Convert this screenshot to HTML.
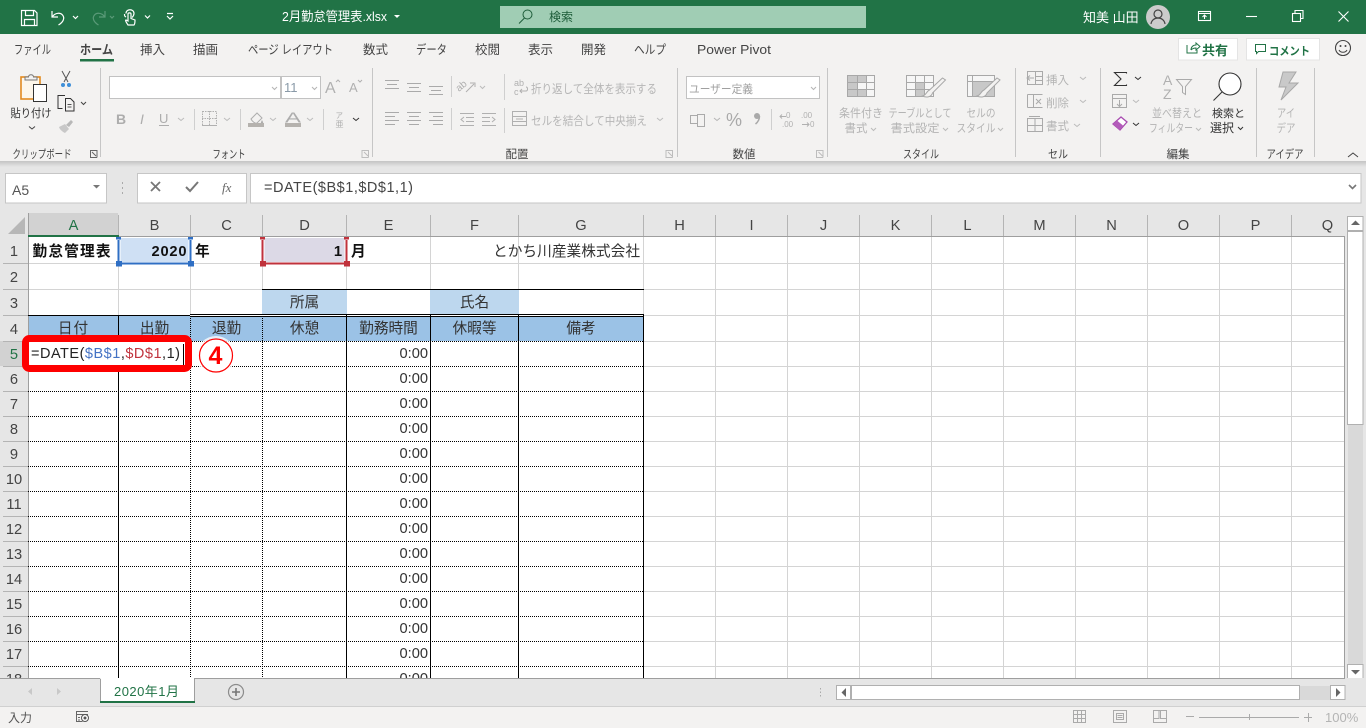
<!DOCTYPE html>
<html lang="ja"><head><meta charset="utf-8"><title>2月勤怠管理表.xlsx</title>
<style>
html,body{margin:0;padding:0;width:1366px;height:728px;overflow:hidden;background:#e6e6e6}
svg{display:block;position:absolute;left:0;top:0}
text{font-family:"Liberation Sans","Noto Sans CJK JP",sans-serif;white-space:pre}
.tab{font-size:12.5px;fill:#444}
.lbl{font-size:11.5px;fill:#444;text-anchor:middle}
.dis{font-size:11.5px;fill:#b4b4b4}
.dm{text-anchor:middle}
.c{font-size:14.67px;fill:#333}
.b{font-weight:bold;fill:#111}
.h{font-size:14.67px;fill:#444;text-anchor:middle}
.m{text-anchor:middle}
.e{text-anchor:end}
</style></head><body>
<svg width="1366" height="728" viewBox="0 0 1366 728" xmlns="http://www.w3.org/2000/svg">
<defs>
<linearGradient id="sh" x1="0" y1="0" x2="0" y2="1"><stop offset="0" stop-color="#c4c4c4"/><stop offset="1" stop-color="#e6e6e6"/></linearGradient>
<clipPath id="sheet"><rect x="0" y="213" width="1345" height="465"/></clipPath>
</defs>

<!-- title bar -->
<rect width="1366" height="34" fill="#217346"/>
<g fill="none" stroke="#fff" stroke-width="1.2">
<path d="M21.500 10.500h13l2.500 2.500v12.500h-15.500z"/><path d="M25.500 10.500v5h8v-5M24.500 25.500v-6h10v6"/>
<path d="M52 11v6h6M52.500 16.500c3-4 8-4 10-1.500 2.500 3 1 7-4 10"/>
<path d="M73 16l2.500 2.500 2.500-2.500"/>
</g>
<g fill="none" stroke="#5a9a78" stroke-width="1.200"><path d="M105 11v6h-6M104.500 16.500c-3-4-8-4-10-1.500-2.500 3-1 7 4 10"/><path d="M110 16l2 2 2-2"/></g>
<g fill="none" stroke="#fff" stroke-width="1.200">
<path d="M126 13.500c0-5 8-5 8 0 0 2-1 3-2 4M126 17c-1.500-1-1.500-1-1.500-3"/><path d="M128 14v7l-2-1c-1 0 0 2 2 5h6c1-1 1-3 1-5l-4-1.500v-4.500c0-1.500-3-1.500-3 0z"/>
<path d="M145 15.500l2.500 2.500 2.500-2.500"/><path d="M167 13.500h6M167 16l3 3 3-3"/>
</g>
<text x="282" y="21" font-size="13" fill="#fff" textLength="105" lengthAdjust="spacingAndGlyphs">2月勤怠管理表.xlsx</text>
<path d="M394 15h6l-3 3z" fill="#fff"/>
<rect x="500" y="6" width="366" height="22" fill="#a0cdb4"/>
<circle cx="527.500" cy="14.500" r="4.500" fill="none" stroke="#1d5c39" stroke-width="1"/><path d="M524.500 18l-5.500 5.500" stroke="#1d5c39" stroke-width="1"/>
<text x="549" y="21" font-size="12" fill="#1d5c39">検索</text>
<text x="1083" y="22" font-size="13" fill="#fff">知美 山田</text>
<circle cx="1158" cy="17" r="12" fill="#cbcbcb"/>
<circle cx="1158" cy="14" r="4" fill="none" stroke="#444" stroke-width="1.200"/><path d="M1151 24c1-8 13-8 14 0" fill="none" stroke="#444" stroke-width="1.200"/>
<g fill="none" stroke="#fff" stroke-width="1.100">
<rect x="1198.500" y="11.500" width="12" height="9"/><path d="M1198.500 13.500h12M1204.500 19v-4M1202.500 17l2-2 2 2"/>
<path d="M1246 16.500h11"/>
<rect x="1292.500" y="13.500" width="8" height="8"/><path d="M1295 13v-2.500h8v8h-2.500"/>
<path d="M1338.500 11.500l10 10M1348.500 11.500l-10 10"/>
</g>

<!-- ribbon -->
<rect y="34" width="1366" height="127" fill="#f3f2f1"/>
<rect y="161" width="1366" height="6" fill="url(#sh)"/>
<text class="tab" x="14" y="54" textLength="37" lengthAdjust="spacingAndGlyphs">ファイル</text>
<text class="tab" x="80" y="54" font-weight="bold" textLength="33" lengthAdjust="spacingAndGlyphs">ホーム</text>
<rect x="80" y="59" width="34" height="2.500" fill="#217346"/>
<text class="tab" x="140" y="54">挿入</text>
<text class="tab" x="193" y="54">描画</text>
<text class="tab" x="248" y="54" textLength="85" lengthAdjust="spacingAndGlyphs">ページ レイアウト</text>
<text class="tab" x="363" y="54">数式</text>
<text class="tab" x="416" y="54" textLength="31" lengthAdjust="spacingAndGlyphs">データ</text>
<text class="tab" x="475" y="54">校閲</text>
<text class="tab" x="528" y="54">表示</text>
<text class="tab" x="581" y="54">開発</text>
<text class="tab" x="634" y="54" textLength="32" lengthAdjust="spacingAndGlyphs">ヘルプ</text>
<text class="tab" x="697" y="54" textLength="74" lengthAdjust="spacingAndGlyphs">Power Pivot</text>

<rect x="1178.500" y="38.500" width="59" height="21.500" fill="#fff" stroke="#e4e4e4"/>
<path d="M1187 45v8h10v-3M1191 50c0-3 2-5 5-5v-2l4 3.500-4 3.500v-2c-2 0-4 1-5 2" fill="none" stroke="#217346"/>
<text x="1202" y="55" font-size="13" font-weight="bold" fill="#217346">共有</text>
<rect x="1246.500" y="38.500" width="73" height="21.500" fill="#fff" stroke="#e4e4e4"/>
<path d="M1255.500 44.500h10v7h-7l-2 2v-2h-1z" fill="none" stroke="#217346"/>
<text x="1269" y="55" font-size="11.500" font-weight="bold" fill="#217346" textLength="41" lengthAdjust="spacingAndGlyphs">コメント</text>
<circle cx="1343" cy="48" r="7.500" fill="none" stroke="#444" stroke-width="1.100"/><circle cx="1340.500" cy="46" r="1" fill="#444"/><circle cx="1345.500" cy="46" r="1" fill="#444"/><path d="M1339 50c1.500 3 6.500 3 8 0" fill="none" stroke="#444"/>

<!-- group separators -->
<path d="M100.500 68v89M372.500 68v89M677.500 68v89M827.500 68v89M1015.500 68v89M1100.500 68v89M1256.500 68v89M1314.500 68v89" stroke="#c6c6c6"/>
<text class="lbl" x="42" y="158" textLength="59" lengthAdjust="spacingAndGlyphs">クリップボード</text>
<text class="lbl" x="229" y="158" textLength="33" lengthAdjust="spacingAndGlyphs">フォント</text>
<text class="lbl" x="517" y="158">配置</text>
<text class="lbl" x="744" y="158">数値</text>
<text class="lbl" x="921" y="158" textLength="36" lengthAdjust="spacingAndGlyphs">スタイル</text>
<text class="lbl" x="1058" y="158" textLength="20" lengthAdjust="spacingAndGlyphs">セル</text>
<text class="lbl" x="1178" y="158">編集</text>
<text class="lbl" x="1285" y="158" textLength="37" lengthAdjust="spacingAndGlyphs">アイデア</text>
<path d="M90 150.500h7v7M90.500 151v6.500h6.500M92 152l4 4" fill="none" stroke="#666"/>
<path d="M361.500 150.500h7v7M362 151v6.500h6.500M364 152l4 4M665.500 150.500h7v7M666 151v6.500h6.500M668 152l4 4M816 150.500h7v7M816.500 151v6.500h6.500M818.500 152l4 4" fill="none" stroke="#bdbdbd"/>

<!-- clipboard -->
<rect x="21" y="77" width="19" height="22" fill="#fdf6ea" stroke="#e38a1e" stroke-width="1.600"/>
<path d="M25 80v-3h3.500c0-3 5-3 5 0h3.500v3z" fill="#f3f2f1" stroke="#777"/>
<rect x="33.500" y="84.500" width="13" height="17" fill="#fff" stroke="#333"/>
<text x="31" y="117" font-size="11.500" fill="#333" class="m" textLength="41" lengthAdjust="spacingAndGlyphs">貼り付け</text>
<path d="M29 126.500l3 2.500 3-2.500" fill="none" stroke="#444"/>
<path d="M62 71l6 11M70 71l-6 11" stroke="#555" fill="none"/><circle cx="63" cy="85" r="2" fill="#3f8fd8"/><circle cx="69" cy="85" r="2" fill="#3f8fd8"/>
<path d="M62.500 108.500h-4.500v-13h7M65.500 98.500h5l3.500 3.500v9h-8.500z" fill="none" stroke="#333"/><path d="M67.500 104.500h4M67.500 107h4" stroke="#555"/>
<path d="M81 102l2.500 2.500 2.500-2.500" fill="none" stroke="#444"/>
<path d="M59 127l6-3 4 5-4 4c-2-1-5-3-6-6z" fill="#c8c8c8"/><path d="M66 125l5-5 2 2-4 5z" fill="#b8b8b8"/>

<!-- font -->
<rect x="109.500" y="76.500" width="171" height="22" fill="#fff" stroke="#c2c2c2"/>
<rect x="281.500" y="76.500" width="39" height="22" fill="#fff" stroke="#c2c2c2"/>
<path d="M272 87l2.500 2.500 2.500-2.500M312 87l2.500 2.500 2.500-2.500" fill="none" stroke="#b5b5b5"/>
<text x="284" y="92" font-size="13" fill="#8a9aa8">11</text>
<text x="325" y="93" font-size="16" fill="#b0b0b0">A</text><path d="M336 82l2-2 2 2" fill="none" stroke="#b0b0b0"/>
<text x="349" y="92" font-size="13" fill="#b0b0b0">A</text><path d="M358 80l2 2 2-2" fill="none" stroke="#b0b0b0"/>
<text x="116" y="124" font-size="14" font-weight="bold" fill="#adadad">B</text>
<text x="140" y="124" font-size="14" font-style="italic" fill="#adadad" style="font-family:'Liberation Sans'">I</text>
<text x="159" y="123" font-size="13" fill="#adadad">U</text><path d="M159 125.500h10" stroke="#adadad"/>
<path d="M178 118l3 2.500 3-2.500M224 118l3 2.500 3-2.500M270 118l3 2.500 3-2.500M307 118l3 2.500 3-2.500" fill="none" stroke="#bcbcbc"/>
<path d="M194.500 109v21M240.500 109v21M323.500 109v21" stroke="#cfcfcf"/>
<rect x="202.500" y="111.500" width="14" height="14" fill="none" stroke="#b0b0b0" stroke-dasharray="1.500 1"/><path d="M209.500 111v15M202 118.500h15" stroke="#b0b0b0" stroke-dasharray="1.500 1"/><path d="M202 125.500h15" stroke="#b0b0b0"/>
<path d="M251 119l6-6 5 5-5 5c-2 1-5-2-6-4z" fill="none" stroke="#adadad"/><path d="M262 120c1 2 2 3 0 4-2 0-1-2 0-4z" fill="#adadad"/><rect x="248" y="123" width="16" height="4" fill="#b5b2ae"/>
<text x="285" y="122.500" font-size="15" fill="#adadad" textLength="16" lengthAdjust="spacingAndGlyphs">A</text><rect x="285" y="123" width="16" height="4" fill="#b5b2ae"/>
<text x="335.500" y="118" font-size="7.500" fill="#adadad">ア</text><text x="335.500" y="127" font-size="8" fill="#adadad">亜</text>
<path d="M353 118l3 2.500 3-2.500" fill="none" stroke="#333"/>

<!-- alignment -->
<path d="M385 80.500h14M387 84.500h10M385 88.500h14M407 83.500h14M409 87.500h10M407 91.500h14M429 86.500h14M431 90.500h10M429 94.500h14" stroke="#aaa"/>
<path d="M385 112.500h14M385 116.500h10M385 120.500h14M385 124.500h10M407 112.500h14M409 116.500h10M407 120.500h14M409 124.500h10M429 112.500h14M433 116.500h10M429 120.500h14M433 124.500h10" stroke="#aaa"/>
<path d="M451.500 76v21M451.500 108v22M504.500 74v26M504.500 108v25" stroke="#cfcfcf"/>
<text x="459" y="92" font-size="10" fill="#b0b0b0" transform="rotate(-40 459 92)">ab</text><path d="M466 92l8-8M470 83h5v4" fill="none" stroke="#b0b0b0"/><path d="M480 86l2.500 2.500 2.500-2.500" fill="none" stroke="#bcbcbc"/>
<path d="M460 113.500h14M460 125.500h14M466 117.500h8M466 121.500h8M464 117l-3 2.500 3 2.500M482 113.500h14M482 125.500h14M482 117.500h8M482 121.500h8M492 117l3 2.500-3 2.500" fill="none" stroke="#b0b0b0"/>
<text x="514" y="86" font-size="9" fill="#b0b0b0">ab</text><text x="514" y="95" font-size="9" fill="#b0b0b0">c</text><path d="M520 91h6c2 0 2-4 0-4M522 89l-2 2 2 2" fill="none" stroke="#b0b0b0"/>
<text x="531" y="93" font-size="12" fill="#b6b6b6" textLength="126" lengthAdjust="spacingAndGlyphs">折り返して全体を表示する</text>
<rect x="512.500" y="111.500" width="14" height="14" fill="none" stroke="#b0b0b0"/><path d="M512 116.500h15M512 121.500h15M516 119h7" stroke="#b0b0b0"/>
<text x="531" y="125" font-size="12" fill="#b6b6b6" textLength="116" lengthAdjust="spacingAndGlyphs">セルを結合して中央揃え</text>
<path d="M657 118l3 2.500 3-2.500" fill="none" stroke="#bcbcbc"/>

<!-- number -->
<rect x="686.500" y="76.500" width="133" height="22" fill="#fff" stroke="#c2c2c2"/>
<text x="689" y="93" font-size="11.500" fill="#a0a0a0" textLength="64" lengthAdjust="spacingAndGlyphs">ユーザー定義</text>
<path d="M811 87l2.500 2.500 2.500-2.500M714 118l3 2.500 3-2.500" fill="none" stroke="#b5b5b5"/>
<rect x="690.500" y="115.500" width="12" height="8" fill="none" stroke="#aaa"/><rect x="697.500" y="114.500" width="7" height="12" fill="#f3f2f1" stroke="#aaa"/>
<text x="726" y="126" font-size="18" fill="#a9a9a9">%</text>
<circle cx="757" cy="116" r="3" fill="#a9a9a9"/><path d="M759.500 116c0 4-1.500 6-4 8" fill="none" stroke="#a9a9a9" stroke-width="1.500"/>
<path d="M771.500 109v21" stroke="#cfcfcf"/>
<text x="786" y="118" font-size="8" fill="#b0b0b0">0</text><text x="782" y="127" font-size="8" fill="#b0b0b0">.00</text>
<path d="M780 116.500h6M782 114.500l-2 2 2 2" stroke="#b0b0b0" fill="none"/>
<text x="801" y="118" font-size="8" fill="#b0b0b0">.00</text><text x="810" y="127" font-size="8" fill="#b0b0b0">0</text>
<path d="M802 124.500h7M807 122.500l2 2-2 2" stroke="#b0b0b0" fill="none"/>

<!-- styles -->
<rect x="847.500" y="75.500" width="27" height="21" fill="#f6f6f6" stroke="#a8a8a8"/>
<path d="M848 75h18v7h-9v7h9v7h-18z" fill="#c8c8c8"/>
<path d="M847 82.500h28M847 89.500h28M857.500 75v22M866.500 75v22" stroke="#a8a8a8"/><rect x="847.500" y="75.500" width="27" height="21" fill="none" stroke="#a8a8a8"/>
<rect x="906.500" y="75.500" width="27" height="21" fill="#f6f6f6" stroke="#a8a8a8"/><rect x="916" y="83" width="9" height="13" fill="#c8c8c8"/>
<path d="M906 82.500h28M906 89.500h28M915.500 75v22M924.500 75v22" stroke="#a8a8a8"/>
<path d="M946.500 78l-13 12c-3 1-3 5-7 6 4 2 9 1 10-3l13-13z" fill="#f3f2f1" stroke="#a8a8a8" transform="translate(-4 0)"/>
<rect x="967.500" y="75.500" width="27" height="21" fill="#f6f6f6" stroke="#a8a8a8"/><rect x="972" y="82" width="22" height="14" fill="#c8c8c8"/>
<path d="M967 81.500h28M972.500 75v22" stroke="#a8a8a8"/>
<path d="M1001 78l-13 12c-3 1-3 5-7 6 4 2 9 1 10-3l13-13z" fill="#f3f2f1" stroke="#a8a8a8" transform="translate(-4 0)"/>
<text class="dis dm" x="861" y="117" textLength="44" lengthAdjust="spacingAndGlyphs">条件付き</text><text class="dis dm" x="856" y="132">書式</text><path d="M871 128l2.500 2.500 2.500-2.500" fill="none" stroke="#bbb"/>
<text class="dis dm" x="920" y="117" textLength="63" lengthAdjust="spacingAndGlyphs">テーブルとして</text><text class="dis dm" x="915" y="132" textLength="49" lengthAdjust="spacingAndGlyphs">書式設定</text><path d="M943 128l2.500 2.500 2.500-2.500" fill="none" stroke="#bbb"/>
<text class="dis dm" x="981" y="117" textLength="29" lengthAdjust="spacingAndGlyphs">セルの</text><text class="dis dm" x="976" y="132" textLength="39" lengthAdjust="spacingAndGlyphs">スタイル</text><path d="M998 128l2.500 2.500 2.500-2.500" fill="none" stroke="#bbb"/>

<!-- cells -->
<rect x="1027.500" y="71.500" width="15" height="13" fill="none" stroke="#aaa"/><path d="M1035.500 71v14M1035 76.500h8M1035 80.500h8M1027 78h7M1030 75.500l-3 2.500 3 2.500" fill="none" stroke="#aaa"/>
<text class="dis" x="1046" y="84">挿入</text><path d="M1080 77l3 2.500 3-2.500" fill="none" stroke="#bbb"/>
<path d="M1027.500 94.500h15M1027.500 107.500h15M1027.500 94.500v13M1033.500 95v12M1036 99l5 5M1041 99l-5 5" fill="none" stroke="#aaa"/>
<text class="dis" x="1046" y="107">削除</text><path d="M1080 100l3 2.500 3-2.500" fill="none" stroke="#bbb"/>
<rect x="1027.500" y="118.500" width="15" height="13" fill="none" stroke="#aaa"/><path d="M1035 118v14M1027 125.500h16M1029 116.500h11" stroke="#aaa"/>
<text class="dis" x="1046" y="130">書式</text><path d="M1074 124l3 2.500 3-2.500" fill="none" stroke="#bbb"/>

<!-- editing -->
<path d="M1126.500 73.500v-1h-12l6.500 6.500-6.500 6.500h12v-1" fill="none" stroke="#333" stroke-width="1.100"/><path d="M1135 77l3 2.500 3-2.500M1133 123l3 2.500 3-2.500" fill="none" stroke="#333"/>
<rect x="1112.500" y="94.500" width="14" height="13" fill="none" stroke="#aaa"/><path d="M1112 98.500h15M1119.500 100v6M1117 104l2.500 2.500 2.500-2.500" fill="none" stroke="#aaa"/><path d="M1133 100l3 2.500 3-2.500" fill="none" stroke="#bbb"/>
<path d="M1113 124l8-7 6 5-7 8z" fill="#fff" stroke="#a84bb0" stroke-width="1.300"/><path d="M1113 124l4-3.500 6 5-3.500 4.500z" fill="#b35cba"/>
<text x="1163" y="85" font-size="14" fill="#b0b0b0">A</text><text x="1163" y="99" font-size="14" fill="#b0b0b0">Z</text>
<path d="M1176.500 79.500h15l-6 7v8l-3-2v-6z" fill="none" stroke="#aaa"/>
<text class="dis dm" x="1177" y="117" textLength="50" lengthAdjust="spacingAndGlyphs">並べ替えと</text><text class="dis dm" x="1171" y="132" textLength="44" lengthAdjust="spacingAndGlyphs">フィルター</text><path d="M1196 128l2.500 2.500 2.500-2.500" fill="none" stroke="#bbb"/>
<circle cx="1230" cy="84" r="11" fill="#fff" stroke="#333" stroke-width="1.100"/><path d="M1222 92l-8.500 8.500" stroke="#333" stroke-width="1.100"/>
<text x="1228.500" y="117" font-size="11" fill="#333" class="m">検索と</text><text x="1222" y="132" font-size="12" fill="#333" class="m">選択</text>
<path d="M1238 127l2.500 2.500 2.500-2.500" fill="none" stroke="#333"/>
<path d="M1283 72h13l-7 11h9l-17 17 5-13h-7z" fill="#c9c9c9" stroke="#a8a8a8"/>
<text class="dis dm" x="1286" y="117" textLength="18" lengthAdjust="spacingAndGlyphs">アイ</text><text class="dis dm" x="1286" y="132" textLength="19" lengthAdjust="spacingAndGlyphs">デア</text>
<path d="M1348 157l5-4 5 4" fill="none" stroke="#444"/>

<!-- formula bar -->
<rect y="167" width="1366" height="46" fill="#e6e6e6"/>
<rect x="5.500" y="173.500" width="101" height="29.500" fill="#fff" stroke="#c6c6c6"/>
<text x="12" y="195" font-size="14" fill="#555">A5</text>
<path d="M93 185h7l-3.500 3.500z" fill="#777"/>
<path d="M122.500 182v2M122.500 187v2M122.500 192v2" stroke="#aaa"/>
<rect x="137.500" y="173.500" width="109" height="29.500" fill="#fff" stroke="#c6c6c6"/>
<path d="M151 182l9 9M160 182l-9 9" stroke="#777" stroke-width="1.800"/>
<path d="M186 187l4 4 8-9" fill="none" stroke="#777" stroke-width="2"/>
<text x="222" y="192" font-size="13" font-style="italic" fill="#666" style="font-family:'Liberation Serif'">fx</text>
<rect x="250.500" y="173.500" width="1110.500" height="29.500" fill="#fff" stroke="#c6c6c6"/>
<text x="264" y="192" font-size="14.500" fill="#444" textLength="149">=DATE($B$1,$D$1,1)</text>
<path d="M1349 185l3.500 3.500 3.500-3.500" fill="none" stroke="#777" stroke-width="1.600"/>

<!-- sheet -->
<g clip-path="url(#sheet)">
<rect x="28" y="237" width="1317" height="441" fill="#fff"/>
<rect x="0" y="213" width="1345" height="24" fill="#e6e6e6"/>
<rect x="0" y="237" width="28" height="441" fill="#e6e6e6"/>
<rect x="28" y="213" width="90" height="24" fill="#d2d2d2"/>
<rect x="0" y="341" width="28" height="25" fill="#d2d2d2"/>
<polygon points="8,234 25,234 25,217" fill="#b7b7b7"/>

<!-- fills -->
<rect x="262" y="290" width="85" height="25" fill="#bdd7ee"/>
<rect x="430" y="290" width="89" height="25" fill="#bdd7ee"/>
<rect x="28" y="316" width="616" height="25" fill="#9bc2e6"/>
<rect x="119" y="238" width="71" height="25" fill="#cfe0f4"/>
<rect x="263" y="238" width="83" height="25" fill="#dcd9e6"/>

<!-- light grid -->
<path stroke="#d4d4d4" fill="none" d="M118.500 263V315M190.500 263V315M262.500 263V289M346.500 263V289M430.500 237V289M518.500 237V289M643.500 237V315M715.500 237V678M787.500 237V678M859.500 237V678M931.500 237V678M1003.500 237V678M1075.500 237V678M1147.500 237V678M1219.500 237V678M1291.500 237V678
M28 263.500H1345M28 289.500H262M28 315.500H190M644 289.500H1345M644 315.500H1345M644 341.500H1345M644 366.500H1345M644 391.500H1345M644 416.500H1345M644 441.500H1345M644 466.500H1345M644 491.500H1345M644 516.500H1345M644 541.500H1345M644 566.500H1345M644 591.500H1345M644 616.500H1345M644 641.500H1345M644 666.500H1345"/>
<!-- headers lines -->
<path stroke="#b4b4b4" fill="none" d="M118.500 215V237M190.500 215V237M262.500 215V237M346.500 215V237M430.500 215V237M518.500 215V237M643.500 215V237M715.500 215V237M787.500 215V237M859.500 215V237M931.500 215V237M1003.500 215V237M1075.500 215V237M1147.500 215V237M1219.500 215V237M1291.500 215V237
M3 263.500H28M3 289.500H28M3 315.500H28M3 341.500H28M3 366.500H28M3 391.500H28M3 416.500H28M3 441.500H28M3 466.500H28M3 491.500H28M3 516.500H28M3 541.500H28M3 566.500H28M3 591.500H28M3 616.500H28M3 641.500H28M3 666.500H28"/>
<path stroke="#9e9e9e" fill="none" d="M28.500 213V678M28 236.500H1345M1344.500 237V678"/>
<rect x="28" y="235" width="91" height="2" fill="#217346"/>

<!-- dark borders -->
<path stroke="#000" fill="none" d="M118.500 316V678M346.500 315V678M430.500 315V678M518.500 315V678M643.500 315V678M28 315.500H190M262 289.500H644M190 314.500H644M190 316.500H644"/>
<path stroke="#000" fill="none" stroke-dasharray="1 1" d="M190.500 316V678M262.500 316V678M28 341.500H644M28 366.500H644M28 391.500H644M28 416.500H644M28 441.500H644M28 466.500H644M28 491.500H644M28 516.500H644M28 541.500H644M28 566.500H644M28 591.500H644M28 616.500H644M28 641.500H644M28 666.500H644"/>

<!-- reference outlines -->
<path d="M118.500 240V261M190.500 240V261M121 264H188" fill="none" stroke="#fff" stroke-width="4"/>
<path d="M118.500 240V261M190.500 240V261M121 263.500H188" fill="none" stroke="#2f6fc4" stroke-width="2"/>
<g fill="#2f6fc4"><rect x="116" y="237" width="5" height="2.500"/><rect x="188" y="237" width="5" height="2.500"/><rect x="116" y="261" width="6" height="5.500"/><rect x="188" y="261" width="6" height="5.500"/></g>
<path d="M262.500 240V261M346.500 240V261M265 264H344" fill="none" stroke="#fff" stroke-width="4"/>
<path d="M262.500 240V261M346.500 240V261M265 263.500H344" fill="none" stroke="#c0323c" stroke-width="2"/>
<g fill="#c0323c"><rect x="260" y="237" width="5" height="2.500"/><rect x="344" y="237" width="5" height="2.500"/><rect x="260" y="261" width="6" height="5.500"/><rect x="344" y="261" width="6" height="5.500"/></g>

<!-- column headers -->
<text class="h" x="73.500" y="230" style="fill:#217346">A</text>
<text class="h" x="154.500" y="230">B</text><text class="h" x="226.500" y="230">C</text><text class="h" x="304.500" y="230">D</text><text class="h" x="388.500" y="230">E</text><text class="h" x="474.500" y="230">F</text><text class="h" x="581" y="230">G</text><text class="h" x="679.500" y="230">H</text><text class="h" x="751.500" y="230">I</text><text class="h" x="823.500" y="230">J</text><text class="h" x="895.500" y="230">K</text><text class="h" x="967.500" y="230">L</text><text class="h" x="1039.500" y="230">M</text><text class="h" x="1111.500" y="230">N</text><text class="h" x="1183.500" y="230">O</text><text class="h" x="1255.500" y="230">P</text><text class="h" x="1327.500" y="230">Q</text>
<!-- row headers -->
<text class="h" x="14" y="256">1</text><text class="h" x="14" y="282">2</text><text class="h" x="14" y="308">3</text><text class="h" x="14" y="334">4</text><text class="h" x="14" y="359" style="fill:#217346">5</text><text class="h" x="14" y="384">6</text><text class="h" x="14" y="409">7</text><text class="h" x="14" y="434">8</text><text class="h" x="14" y="459">9</text><text class="h" x="14" y="484">10</text><text class="h" x="14" y="509">11</text><text class="h" x="14" y="534">12</text><text class="h" x="14" y="559">13</text><text class="h" x="14" y="584">14</text><text class="h" x="14" y="609">15</text><text class="h" x="14" y="634">16</text><text class="h" x="14" y="659">17</text><text class="h" x="14" y="684">18</text>

<!-- cells -->
<text class="c b" x="32.500" y="256" textLength="78">勤怠管理表</text>
<text class="c b e" x="186.500" y="256" textLength="35">2020</text>
<text class="c b" x="195" y="256">年</text>
<text class="c b e" x="342" y="256">1</text>
<text class="c b" x="351" y="256">月</text>
<text class="c e" x="640" y="256" textLength="147">とかち川産業株式会社</text>
<text class="c m" x="304.500" y="307">所属</text><text class="c m" x="474.500" y="307">氏名</text>
<text class="c m" x="73.500" y="333" letter-spacing="1">日付</text><text class="c m" x="154.500" y="333">出勤</text><text class="c m" x="226.500" y="333">退勤</text><text class="c m" x="304.500" y="333">休憩</text><text class="c m" x="388.500" y="333">勤務時間</text><text class="c m" x="474.500" y="333">休暇等</text><text class="c m" x="581" y="333">備考</text>
<text class="c e" x="428" y="358">0:00</text><text class="c e" x="428" y="383">0:00</text><text class="c e" x="428" y="408">0:00</text><text class="c e" x="428" y="433">0:00</text><text class="c e" x="428" y="458">0:00</text><text class="c e" x="428" y="483">0:00</text><text class="c e" x="428" y="508">0:00</text><text class="c e" x="428" y="533">0:00</text><text class="c e" x="428" y="558">0:00</text><text class="c e" x="428" y="583">0:00</text><text class="c e" x="428" y="608">0:00</text><text class="c e" x="428" y="633">0:00</text><text class="c e" x="428" y="658">0:00</text><text class="c e" x="428" y="683">0:00</text>

<!-- callout -->
<rect x="25.500" y="338.500" width="163" height="30" rx="4" fill="#fff" stroke="#fe0000" stroke-width="7"/>
<text x="31" y="358" font-size="14.500" fill="#222" textLength="149"><tspan>=DATE(</tspan><tspan fill="#4472c4">$B$1</tspan><tspan>,</tspan><tspan fill="#c0323c">$D$1</tspan><tspan>,1)</tspan></text>
<path d="M183.500 344v21" stroke="#000"/>
<circle cx="216" cy="355.500" r="19.500" fill="#fff" opacity=".75"/>
<circle cx="216" cy="355.500" r="16.500" fill="#fff" stroke="#fe0000" stroke-width="1.200"/>
<text x="215.500" y="364" font-size="25" font-weight="bold" fill="#fe0000" class="m">4</text>
</g>

<!-- vertical scrollbar -->
<rect x="1345" y="213" width="21" height="465" fill="#e6e6e6"/>
<rect x="1347.500" y="216.500" width="15.500" height="14" fill="#fff" stroke="#b0b0b0"/><path d="M1351 225h9l-4.500-4.500z" fill="#666"/>
<rect x="1347.500" y="231.500" width="15.500" height="193" fill="#fff" stroke="#b0b0b0"/>
<rect x="1348" y="425" width="15" height="239" fill="#d9d9d9"/>
<rect x="1347.500" y="664.500" width="15.500" height="14" fill="#fff" stroke="#b0b0b0"/><path d="M1351 670h9l-4.500 4.500z" fill="#666"/>

<!-- sheet tabs -->
<rect y="678" width="1366" height="28" fill="#e6e6e6"/>
<path d="M0 678.500H100M194 678.500H1345" stroke="#9e9e9e"/>
<path d="M32 688l-4 3.500 4 3.500zM57 688l4 3.500-4 3.500z" fill="#c8c8c8"/>
<path d="M100.500 679v23M194.500 679v23" stroke="#9e9e9e"/>
<rect x="101" y="678" width="93" height="23" fill="#fff"/>
<rect x="100" y="701" width="95" height="2" fill="#217346"/>
<text x="146.500" y="696" font-size="13" fill="#217346" class="m" textLength="65">2020年1月</text>
<circle cx="236" cy="692" r="7.500" fill="none" stroke="#8c8c8c" stroke-width="1.200"/><path d="M232 692h8M236 688v8" stroke="#777" stroke-width="1.600"/>
<path d="M820.500 688v1.500M820.500 691.500v1.500M820.500 695v1.500" stroke="#aaa"/>
<rect x="836.500" y="685.500" width="14" height="14" fill="#fff" stroke="#b0b0b0"/><path d="M846 688v9l-4.500-4.500z" fill="#666"/>
<rect x="851.500" y="685.500" width="448" height="14" fill="#fff" stroke="#b0b0b0"/>
<rect x="1300" y="686" width="30" height="14" fill="#d9d9d9"/>
<rect x="1330.500" y="685.500" width="14.500" height="14" fill="#fff" stroke="#b0b0b0"/><path d="M1336 688v9l4.500-4.500z" fill="#666"/>

<!-- status bar -->
<rect y="706" width="1366" height="22" fill="#f3f2f1"/>
<path d="M0 706.500H1366" stroke="#d0d0d0"/>
<text x="8" y="722" font-size="12" fill="#555">入力</text>
<path d="M76 711.500h12M76 714.500h12M76.500 711v10.500h6M78 717.500h2M78 720h2" fill="none" stroke="#666"/><circle cx="85" cy="718" r="3.500" fill="#fff" stroke="#555"/><circle cx="85" cy="718" r="1.500" fill="#555"/>
<path d="M1073.500 710.500h12v12h-12zM1073 714.500h13M1073 718.500h13M1077.500 710v13M1081.500 710v13" fill="none" stroke="#aaa"/>
<path d="M1113.500 710.500h13v12h-13zM1116.500 713.500h7v6h-7zM1117.500 715.500h5M1117.500 717.500h5" fill="none" stroke="#aaa"/>
<path d="M1153.500 710.500h13v12h-13zM1153 718.500h6v-8M1160.500 710v8.500h6" fill="none" stroke="#aaa"/>
<path d="M1186 716.500h8M1199 717.500h100M1249.500 714v6M1304 717.500h8M1308.500 713v9" stroke="#aaa" fill="none"/>
<text x="1325" y="722" font-size="13" fill="#b4b4b4">100%</text>
</svg>
</body></html>
